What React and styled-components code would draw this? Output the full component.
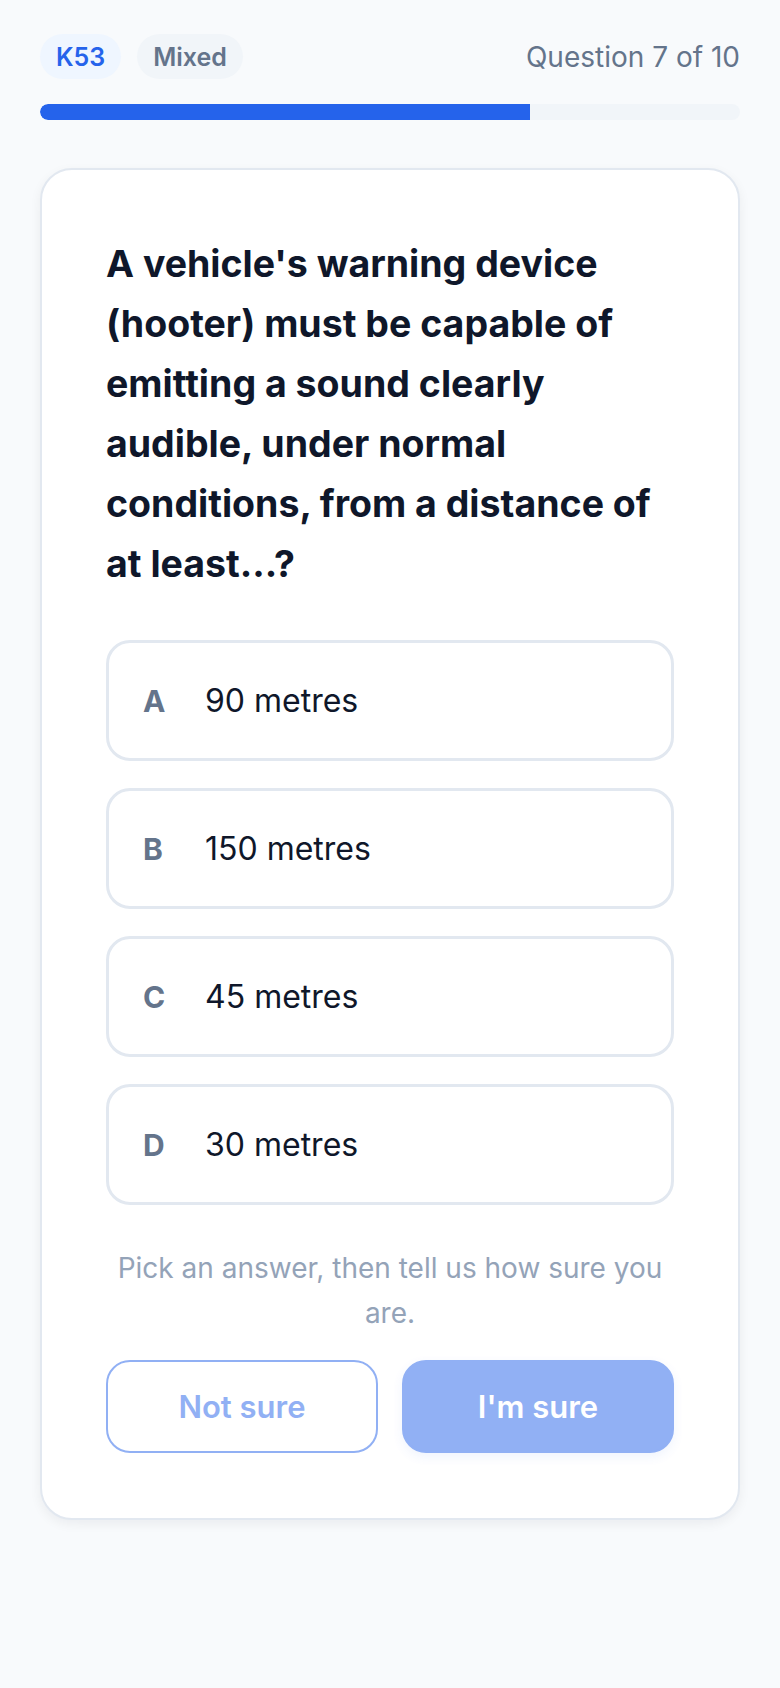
import styled, { createGlobalStyle } from "styled-components";

const GlobalStyle = createGlobalStyle`
  html, body {
    margin: 0;
    padding: 0;
    background: #f8fafc;
  }
  body {
    font-family: Inter, "Noto Sans", sans-serif;
    -webkit-font-smoothing: antialiased;
  }
  * {
    box-sizing: border-box;
  }
`;

const QUESTION = {
  category: "K53",
  mode: "Mixed",
  index: 7,
  total: 10,
  text: "A vehicle's warning device (hooter) must be capable of emitting a sound clearly audible, under normal conditions, from a distance of at least...?",
  options: [
    { key: "A", label: "90 metres" },
    { key: "B", label: "150 metres" },
    { key: "C", label: "45 metres" },
    { key: "D", label: "30 metres" },
  ],
};

function App() {
  const progress = (QUESTION.index / QUESTION.total) * 100;
  return (
    <>
      <GlobalStyle />
      <StPage>
        <StHeader>
          <StTags>
            <StTag $variant="primary">{QUESTION.category}</StTag>
            <StTag>{QUESTION.mode}</StTag>
          </StTags>
          <StCounter>
            Question {QUESTION.index} of {QUESTION.total}
          </StCounter>
        </StHeader>
        <StTrack>
          <StFill style={{ width: `${progress}%` }} />
        </StTrack>
        <StCard>
          <StQuestion>{QUESTION.text}</StQuestion>
          <StOptions>
            {QUESTION.options.map((option) => (
              <StOption key={option.key} type="button">
                <StOptionKey>{option.key}</StOptionKey>
                <StOptionLabel>{option.label}</StOptionLabel>
              </StOption>
            ))}
          </StOptions>
          <StHint>Pick an answer, then tell us how sure you are.</StHint>
          <StActions>
            <StButton type="button" disabled>
              Not sure
            </StButton>
            <StButton type="button" $primary disabled>
              I'm sure
            </StButton>
          </StActions>
        </StCard>
      </StPage>
    </>
  );
}
export default App;

const StPage = styled.div`
  min-height: 1688px;
  padding: 34px 40px 40px;
`;

const StHeader = styled.div`
  display: flex;
  align-items: center;
  justify-content: space-between;
`;

const StTags = styled.div`
  display: flex;
  gap: 16px;
`;

const StTag = styled.span`
  display: inline-flex;
  align-items: center;
  height: 45px;
  padding: 0 16px;
  border-radius: 999px;
  font-size: 25px;
  font-weight: 600;
  background: ${({ $variant }) => ($variant === "primary" ? "#eff6ff" : "#f1f5f9")};
  color: ${({ $variant }) => ($variant === "primary" ? "#2563eb" : "#64748b")};
`;

const StCounter = styled.span`
  font-size: 28px;
  color: #64748b;
`;

const StTrack = styled.div`
  margin-top: 25px;
  height: 16px;
  border-radius: 8px;
  background: #f1f5f9;
  overflow: hidden;
`;

const StFill = styled.div`
  height: 100%;
  background: #2563eb;
  border-radius: 8px 0 0 8px;
`;

const StCard = styled.div`
  margin-top: 48px;
  padding: 64px 64px 65px;
  background: #ffffff;
  border: 2px solid #e2e8f0;
  border-radius: 32px;
  box-shadow: 0 4px 12px rgba(15, 23, 42, 0.06);
`;

const StQuestion = styled.h2`
  margin: 0;
  font-size: 37.5px;
  font-weight: 700;
  line-height: 60px;
  color: #0f172a;
`;

const StOptions = styled.div`
  margin-top: 46px;
  display: flex;
  flex-direction: column;
  gap: 27px;
`;

const StOption = styled.button`
  display: flex;
  align-items: center;
  gap: 24px;
  height: 121px;
  padding: 0 34px;
  background: #ffffff;
  border: 3px solid #e2e8f0;
  border-radius: 24px;
  font-family: inherit;
  text-align: left;
  cursor: pointer;
`;

const StOptionKey = styled.span`
  width: 38px;
  font-size: 30px;
  font-weight: 700;
  color: #64748b;
`;

const StOptionLabel = styled.span`
  font-size: 32px;
  color: #0f172a;
`;

const StHint = styled.p`
  margin: 41px 0 0;
  font-size: 28px;
  line-height: 45px;
  text-align: center;
  color: #94a3b8;
`;

const StActions = styled.div`
  margin-top: 24px;
  display: grid;
  grid-template-columns: 1fr 1fr;
  gap: 24px;
`;

const StButton = styled.button`
  height: 93px;
  border-radius: 24px;
  font-family: inherit;
  font-size: 31px;
  font-weight: 600;
  border: 2px solid #2563eb;
  background: ${({ $primary }) => ($primary ? "#2563eb" : "#ffffff")};
  color: ${({ $primary }) => ($primary ? "#ffffff" : "#2563eb")};
  box-shadow: ${({ $primary }) => ($primary ? "0 4px 10px rgba(37, 99, 235, 0.12)" : "none")};
  opacity: 0.5;
  cursor: not-allowed;
`;
